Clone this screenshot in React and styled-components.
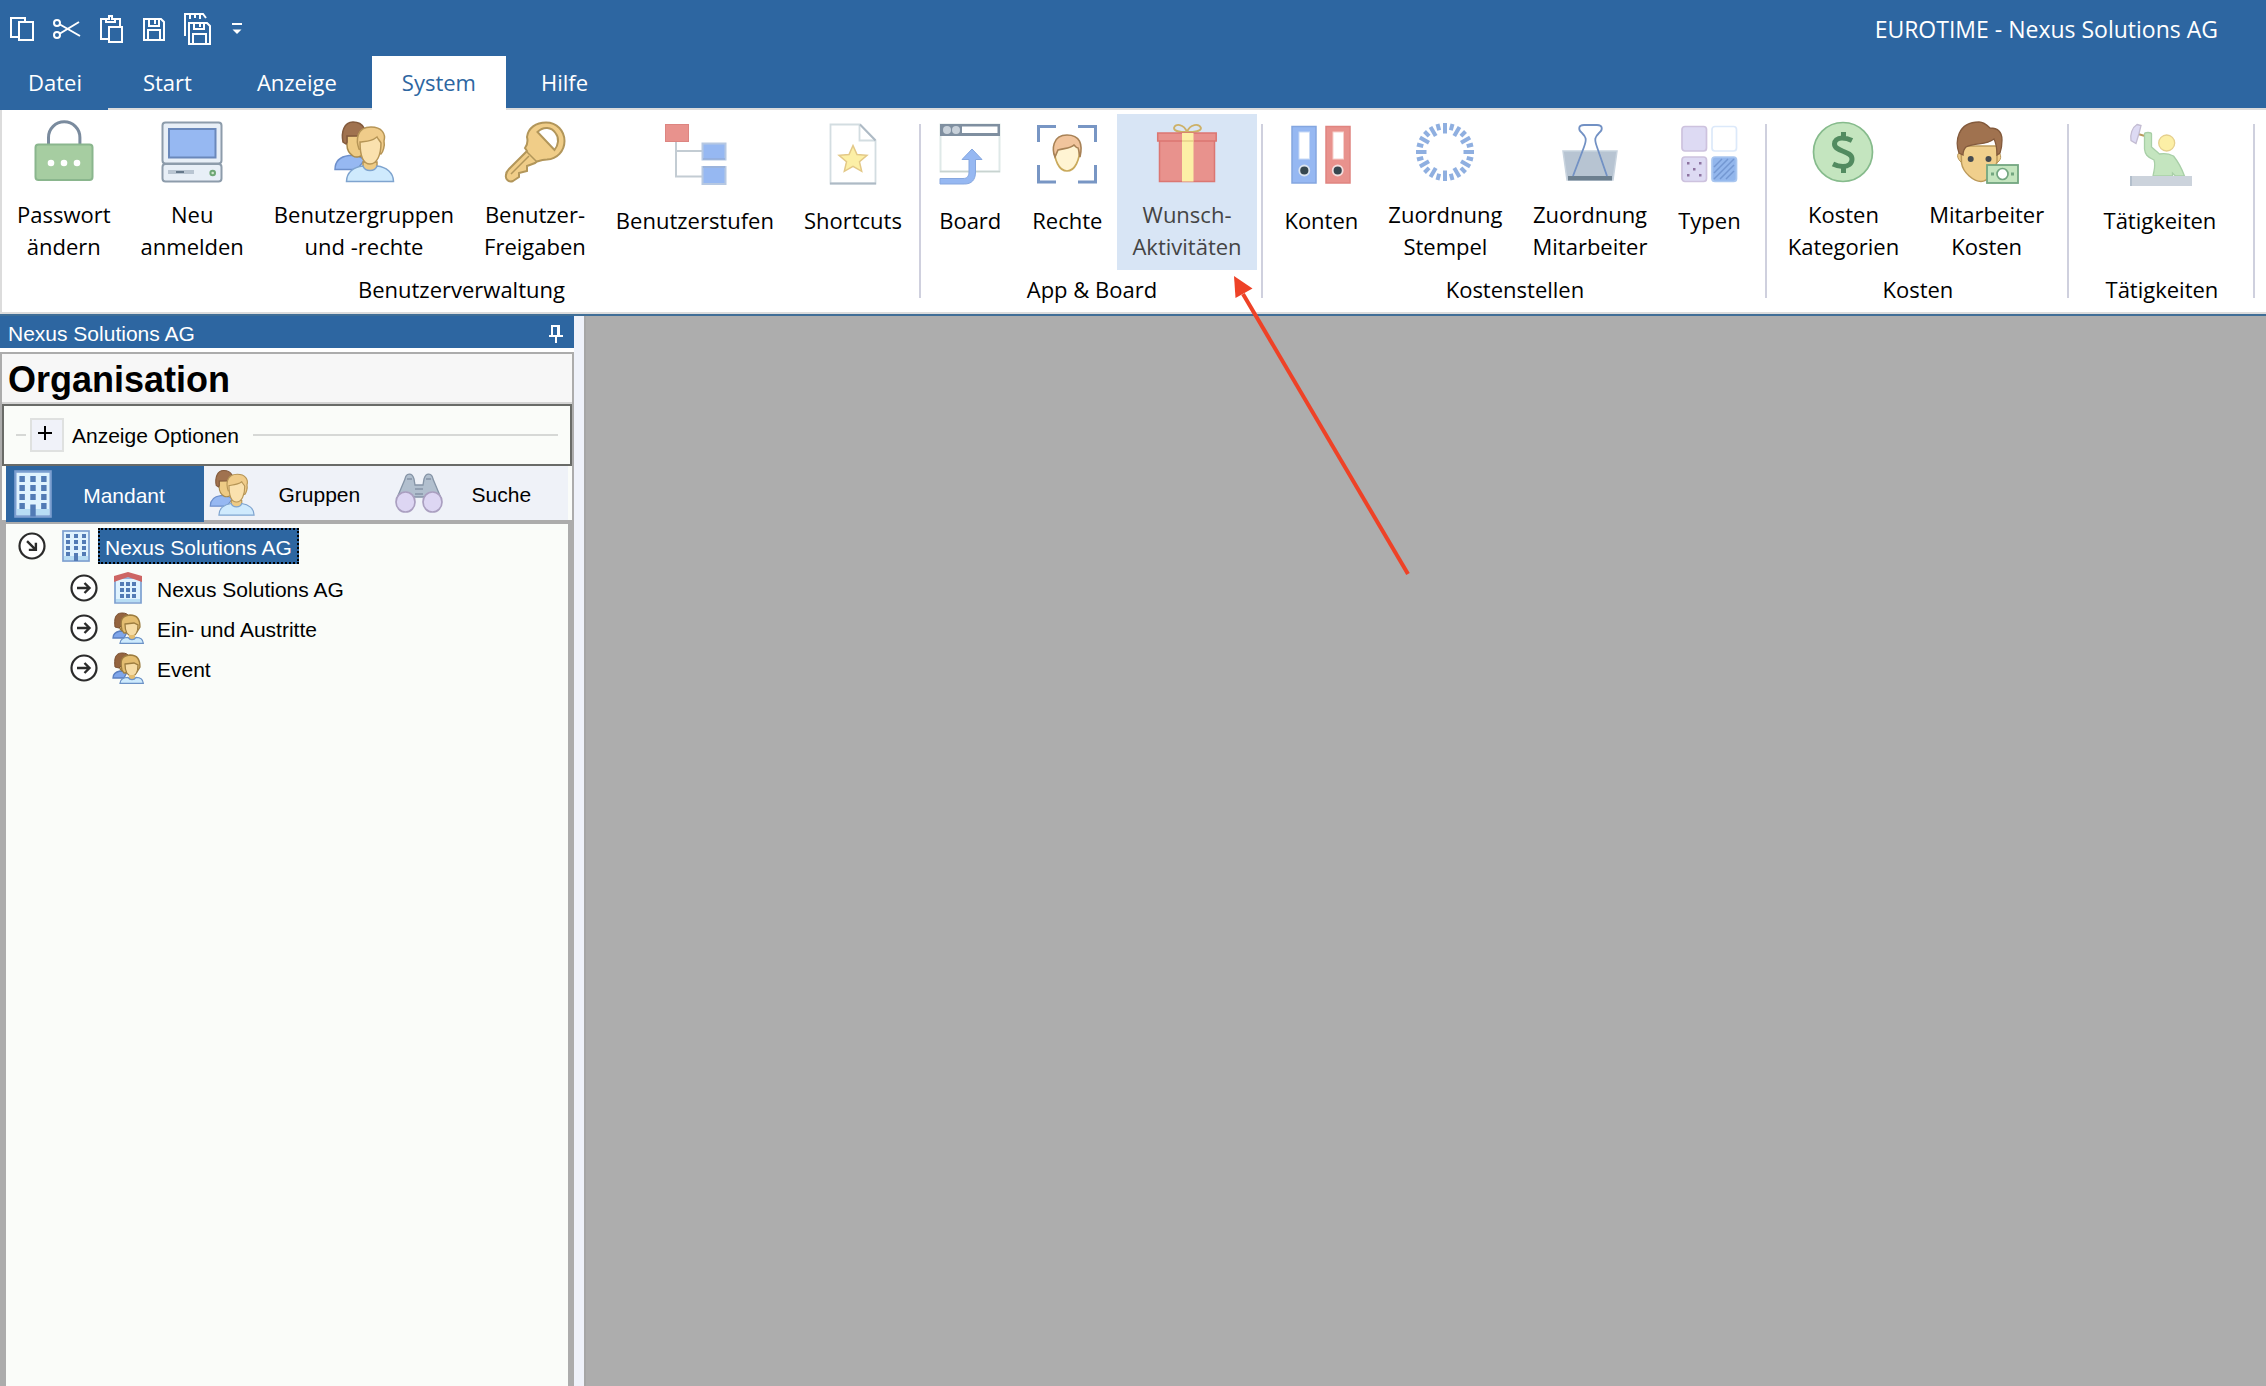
import React, { useState } from "react";
import styled, { createGlobalStyle } from "styled-components";

const BLUE = "#2d66a1";

/* ---------- ribbon icons (64x64) ---------- */

const LockIcon = () => (
  <svg viewBox="0 0 64 64">
    <path d="M16.5 25V17.5a15.7 15.7 0 0 1 31.4 0V25" fill="none" stroke="#7a8b9e" strokeWidth="3" />
    <rect x="3.5" y="24.5" width="57" height="35.5" rx="3" fill="#a6cda1" stroke="#8ab68d" strokeWidth="2" />
    <circle cx="19" cy="43" r="3.3" fill="#fff" />
    <circle cx="32" cy="43" r="3.3" fill="#fff" />
    <circle cx="45" cy="43" r="3.3" fill="#fff" />
  </svg>
);

const ComputerIcon = () => (
  <svg viewBox="0 0 64 64">
    <rect x="2.5" y="2.5" width="59" height="41" rx="3" fill="#e8eff7" stroke="#8d9cab" strokeWidth="2" />
    <rect x="2.5" y="44" width="59" height="17.5" rx="3" fill="#e8eff7" stroke="#8d9cab" strokeWidth="2" />
    <rect x="9" y="9" width="46.5" height="28.5" fill="#96b8f2" stroke="#6a88bb" strokeWidth="2" />
    <rect x="8" y="50" width="26" height="4" fill="#b9c5d2" />
    <rect x="16" y="51" width="8" height="2" fill="#65788b" />
    <circle cx="52.7" cy="53" r="2.3" fill="#cfe6cd" stroke="#6ea775" strokeWidth="2" />
  </svg>
);

const UsersIcon = () => (
  <svg viewBox="0 0 64 64">
    <path d="M3 49.500c0-9 6-13 14-14h8l8 4-8 10z" fill="#96b8f2" stroke="#6d8fcb" strokeWidth="1.5" />
    <path d="M15 16v9c0 5 3 9 6 11 3 2 8 1 10-2V15z" fill="#eecb85" stroke="#a98a4c" strokeWidth="1.5" />
    <path d="M11 22C9 12 12 2 21 2c5 0 9 2 11 6l-6 8H15v6l-1 2z" fill="#a0724f" stroke="#835a3c" strokeWidth="1.5" />
    <path d="M31 42v9c3 4 11 4 14 0v-9z" fill="#eecb85" stroke="#b69556" strokeWidth="1.5" />
    <path d="M27 29c-3-8-3-22 12-22 11 0 15 7 13 14 1 5-1 11-3 13z" fill="#f0cc8a" stroke="#b69556" strokeWidth="1.5" />
    <path d="M28 22c8-1 12-1 17-5 1 2 3 4 4 6 0 12-4 21-11 21s-10-9-10-22z" fill="#fae1ae" stroke="#b69556" strokeWidth="1.5" />
    <path d="M14.5 61.5c0-9 7-14.5 16.5-15.5 2 6 12 6 14 0 9 1 16.5 6.5 16.5 15.5z" fill="#cfeafd" stroke="#7fa4cf" strokeWidth="1.5" />
  </svg>
);

const KeyIcon = () => (
  <svg viewBox="0 0 64 64">
    <path
      d="M24 17C25 8 33 2.500 43 2.500 54 2.500 61.500 11 61.500 21S54 39 44 39.500c-4 0-7 1-10 2l-2 1.500-8 3v5l-8 2v4L10 61c-4 2-8-2-7-6 0-3 1-4 3-6l18-18-2-3c3-4 3-7 2-11z"
      fill="#f0cd88"
      stroke="#b2965a"
      strokeWidth="2"
    />
    <path d="M34.5 12c6-6 14-5 18 1 4 5 3 12-1 17z" fill="#fff" stroke="#b2965a" strokeWidth="2" />
    <path d="M24 32l10 10M8 54l18-18" stroke="#b2965a" strokeWidth="1.5" fill="none" />
  </svg>
);

const TreeIcon = () => (
  <svg viewBox="0 0 64 64">
    <path d="M13 20v34.5h26M13 29h26" fill="none" stroke="#c3ccd3" strokeWidth="2" />
    <rect x="2.5" y="2.5" width="23" height="17" fill="#e8928d" stroke="#dd8581" />
    <rect x="39.5" y="21.5" width="23" height="16" fill="#96b8f2" stroke="#b6c8e2" strokeWidth="2" />
    <rect x="39.5" y="45" width="23" height="17" fill="#96b8f2" stroke="#b6c8e2" strokeWidth="2" />
    <path d="M40 37h22M40 45h22" stroke="#809fd6" />
  </svg>
);

const StarPageIcon = () => (
  <svg viewBox="0 0 64 64">
    <path d="M9.5 2.5H39L54.5 18v43.5h-45z" fill="#fff" stroke="#d3dde1" strokeWidth="1.8" />
    <path d="M38.5 3v15.5H54" fill="none" stroke="#d3dde1" strokeWidth="1.8" />
    <path d="M39 2.5l15.5 16M9 61.5h46" stroke="#aebac5" strokeWidth="1.8" />
    <path d="M32 23.5l4 9 10 .8-7.500 6.5 2.200 9.500-8.700-5-8.700 5 2.200-9.500-7.500-6.500 10-.8z" fill="#fcefa6" stroke="#e3c887" strokeWidth="1.5" />
  </svg>
);

const BoardIcon = () => (
  <svg viewBox="0 0 64 64">
    <rect x="2.5" y="2.5" width="59" height="47" fill="#fff" stroke="#dfe9e8" strokeWidth="2" />
    <path d="M2 49.5h60" stroke="#c8d3d0" strokeWidth="1.5" />
    <rect x="2" y="2" width="60" height="12" fill="#7f8fa0" />
    <rect x="24" y="4.5" width="35.5" height="6.5" fill="#fff" />
    <circle cx="9" cy="8" r="4" fill="#c8d1da" />
    <circle cx="18" cy="8" r="4" fill="#c8d1da" />
    <path d="M2 56.500h23c4 0 6-2 6-7V37.500h-7L34 27l10 10.500h-6.500V50c0 8-4 12-11 12H2z" fill="#96b8f2" stroke="#86a7df" />
  </svg>
);

const FaceScanIcon = () => (
  <svg viewBox="0 0 64 64">
    <path d="M3.5 20V4.5H21M43 4.5h17.5V20M60.5 43v17H43M21 60H3.5V43" fill="none" stroke="#7896c4" strokeWidth="3" />
    <path d="M19 24c0 14 5 25 13 25s13-11 13-25c-1-4-4-6-6-6H25z" fill="#fff4d3" stroke="#c9a95b" strokeWidth="1.7" />
    <path d="M20 35c-3-7-3-22 12-22 13 0 16 9 13 22-1-4-1-7-2-9-2 0-3-2-4-3-4 4-10 3-16 5z" fill="#f1c49c" stroke="#a88256" strokeWidth="1.6" />
  </svg>
);

const GiftIcon = () => (
  <svg viewBox="0 0 64 64">
    <path d="M32 12C26 12 19 12 19 8c1-5 10-4 13 4 3-8 12-9 14-4 0 4-8 4-14 4z" fill="none" stroke="#cdb168" strokeWidth="1.8" />
    <rect x="4.5" y="20" width="55" height="41.5" fill="#e8928d" stroke="#db7672" strokeWidth="1.5" />
    <rect x="2.7" y="13" width="58.5" height="8" fill="#e8928d" stroke="#db7672" strokeWidth="1.5" />
    <rect x="27" y="13" width="11.5" height="48.5" fill="#fcefa6" />
    <path d="M27 21h11.5" stroke="#e7cf87" strokeWidth="1.5" />
  </svg>
);

const FoldersIcon = () => (
  <svg viewBox="0 0 64 64">
    <rect x="3" y="4.5" width="24" height="56.5" fill="#96b8f2" stroke="#84a6e0" strokeWidth="1.5" />
    <rect x="37" y="4.5" width="24" height="56.5" fill="#e8928d" stroke="#e08480" strokeWidth="1.5" />
    <rect x="10" y="10" width="10.5" height="27" fill="#fff" stroke="#c7d9f5" />
    <rect x="44" y="10" width="10.5" height="27" fill="#fff" stroke="#f5cfcc" />
    <circle cx="15.3" cy="48.5" r="5" fill="#36474f" stroke="#dbe4ef" strokeWidth="1.8" />
    <circle cx="48.7" cy="48.5" r="5" fill="#36474f" stroke="#f2dede" strokeWidth="1.8" />
  </svg>
);

const StampIcon = () => (
  <svg viewBox="0 0 64 64">
    {Array.from({ length: 24 }, (_, i) => (
      <path
        key={i}
        d={i % 2 === 0 ? "M32 3v10.5" : "M32 3v6.5"}
        transform={`rotate(${i * 15} 32 32)`}
        stroke="#8fafe0"
        strokeWidth="4"
      />
    ))}
  </svg>
);

const ClipIcon = () => (
  <svg viewBox="0 0 64 64">
    <path d="M5 31h54l-4 29H9z" fill="#b7c4d2" stroke="#c8d3de" strokeWidth="1.5" />
    <rect x="10" y="56" width="44" height="4.5" fill="#6c7f8f" />
    <path d="M15 56l11-29c3-8 2-10-2-14-4-3-4-8 2-8h13c6 0 6 5 2 8-4 4-5 6-2 14l10 29" fill="none" stroke="#7291c4" strokeWidth="1.8" />
  </svg>
);

const TypesIcon = () => (
  <svg viewBox="0 0 64 64">
    <rect x="5" y="4.5" width="24.5" height="24.5" rx="3" fill="#dddaf3" stroke="#cdc2de" strokeWidth="1.7" />
    <rect x="35" y="4.5" width="24.5" height="24.5" rx="3" fill="#fff" stroke="#dce9fa" strokeWidth="1.7" />
    <rect x="5" y="35" width="24.5" height="24.5" rx="3" fill="#dddaf3" stroke="#cdc2de" strokeWidth="1.7" />
    <rect x="35" y="35" width="24.5" height="24.5" rx="3" fill="#92b6ec" stroke="#a9c6ef" strokeWidth="1.7" />
    <path d="M37 45l8-8M37 51l14-14M37 57l20-20M43 57l14-14M49 57l8-8" stroke="#7397d2" strokeWidth="1.5" />
    <path d="M10 40h2.5v2.5H10zM22 40h2.5v2.5H22zM16 46h2.5v2.5H16zM10 52h2.5v2.5H10zM22 52h2.5v2.5H22z" fill="#8d73a0" />
  </svg>
);

const DollarIcon = () => (
  <svg viewBox="0 0 64 64">
    <circle cx="32" cy="32" r="29.5" fill="#c4e5bf" stroke="#86bb8c" strokeWidth="1.7" />
    <path
      d="M41 20.5c-4-2-7-2.500-10-2.500-5 0-7.500 3-7.500 6 0 8 17.500 6.500 17.500 15 0 5-4 7.500-9 7.500-4 0-7-1-10-2.500M32.500 12v7M32.500 46v7"
      fill="none"
      stroke="#528b60"
      strokeWidth="5"
    />
  </svg>
);

const EmployeeCostIcon = () => (
  <svg viewBox="0 0 64 64">
    <path d="M3 34c1-2 5-1 5 2v8l-3-3c-2-2-3-5-2-7zM45 34c-1-2-4-1-4 2v8l3-3c2-2 2-5 1-7z" fill="#f0cc8a" stroke="#b69556" />
    <path d="M6 26h36v16c-2 9-9 19.5-16 19.5S8 53 6.500 43z" fill="#f0cf8c" stroke="#bc9a5b" strokeWidth="1.5" />
    <path d="M4 33C0 22 2 2 24 2c5 0 8 3 11 6 11 0 12 8 12 12 0 6-1 10-2 13l-3 2c0-7-1-12-3-16-9 7-17 3-28 8-2 2-3 4-3 8z" fill="#a0724f" stroke="#835a3c" strokeWidth="1.3" />
    <circle cx="15.7" cy="39" r="3" fill="#454b50" />
    <circle cx="33.5" cy="39" r="3" fill="#454b50" />
    <rect x="32" y="45" width="31" height="18" fill="#c4e5bf" stroke="#73a680" strokeWidth="1.8" />
    <circle cx="47.5" cy="54" r="5.5" fill="#fff" stroke="#73a680" strokeWidth="1.7" />
    <path d="M36 54h3M56 54h3" stroke="#73a680" strokeWidth="3" />
  </svg>
);

const WorkerIcon = () => (
  <svg viewBox="0 0 64 64">
    <path d="M10 12l7 2" stroke="#b99b5e" strokeWidth="2" />
    <path d="M9 2.5l4 1-2 8-3 10-5-3c-1-6 1-13 6-16z" fill="#dddaf3" stroke="#c3bcd2" strokeWidth="1.3" />
    <path
      d="M16.5 12c0-2 7-2 7 0v13l8 7c5-1 10 0 14 2 4 5 8 12 11 20h-9l-3-3v3H25c1-6 3-10 1-16-7-3-9-6-9.500-11z"
      fill="#c4e5bf"
      stroke="#a8cfa7"
      strokeWidth="1.3"
    />
    <circle cx="38.7" cy="21" r="8" fill="#fcefa6" stroke="#e5cf8e" strokeWidth="1.3" />
    <rect x="2" y="54" width="62" height="10" fill="#ccd3dc" />
    <path d="M3 54v10" stroke="#b3bfcc" strokeWidth="2" />
  </svg>
);

/* ---------- quick access icons ---------- */

const CopyIcon = () => (
  <svg width="24" height="24" viewBox="0 0 24 24">
    <path d="M9 20H1V1h14v3M9 5h14v18H9z" />
  </svg>
);

const CutIcon = () => (
  <svg width="28" height="24" viewBox="0 0 28 24">
    <circle cx="4" cy="6" r="3" />
    <circle cx="4" cy="18" r="3" />
    <path d="M7 7.5L27 19M7 16.5L26 5" />
  </svg>
);

const PasteIcon = () => (
  <svg width="24" height="28" viewBox="0 0 24 28">
    <path d="M8 24H1V4h5M15 4h5v7M6 7V4h3V1h3v3h3v3zM9 12h13v15H9z" />
  </svg>
);

const SaveIcon = () => (
  <svg width="22" height="24" viewBox="0 0 22 24">
    <path d="M1 2h17l3 3v18H1zM6 2v7h10V2M12 3v4M5 23V13h12v10" />
  </svg>
);

const SaveAllIcon = () => (
  <svg width="28" height="32" viewBox="0 0 28 32">
    <path d="M1 23V1h18l3 4M6 1v5M11 1v4M16 1v5M5 10h18l3 3v18H5zM10 10v6h10v-6M16 11v3M9 31V21h13v10" />
  </svg>
);

const MoreIcon = () => (
  <svg width="12" height="14" viewBox="0 0 12 14">
    <path d="M1 2h10" />
    <path d="M1.5 7.5h9L6 12z" fill="#fff" stroke="none" />
  </svg>
);

const PinIcon = () => (
  <svg width="16" height="18" viewBox="0 0 16 18">
    <path d="M4 11V1h7v10M10 1v10M1 11h14M8 11v7" fill="none" stroke="#fff" strokeWidth="2" />
  </svg>
);

/* ---------- side panel icons ---------- */

const BuildingIcon = () => (
  <svg viewBox="0 0 28 32" preserveAspectRatio="none">
    <rect x="1" y="1" width="26" height="30" fill="#e0f3fe" stroke="#7c9fd0" strokeWidth="1.7" />
    <path d="M2 26h24v4H2z" fill="#b8ddf4" />
    <path
      d="M4 4h4v4H4zM12 4h4v4h-4zM20 4h4v4h-4zM4 10h4v4H4zM12 10h4v4h-4zM20 10h4v4h-4zM4 16h4v4H4zM12 16h4v4h-4zM20 16h4v4h-4zM4 22h4v4H4zM20 22h4v4h-4zM12 23h4v8h-4z"
      fill="#527bb5"
    />
  </svg>
);

const HouseIcon = () => (
  <svg viewBox="0 0 28 32" preserveAspectRatio="none">
    <path d="M1 6h26v25H1z" fill="#e0f3fe" stroke="#7c9fd0" strokeWidth="1.7" />
    <path d="M2 27h24v3H2z" fill="#b8ddf4" />
    <path d="M0 8V4l14-4 14 4v6L14 5 0 10z" fill="#cd6564" />
    <path
      d="M6 10h4v4H6zM12 10h4v4h-4zM18 10h4v4h-4zM6 16h4v4H6zM12 16h4v4h-4zM18 16h4v4h-4zM6 22h4v4H6zM12 22h4v4h-4zM18 22h4v4h-4z"
      fill="#527bb5"
    />
  </svg>
);

/* smaller users drawing with heavier outlines for tree rows */
const GroupIcon = () => (
  <svg viewBox="0 0 32 32">
    <path d="M1 26c0-4 2-6 7-7l7 1-3 6z" fill="#7fa6ea" stroke="#5c80c0" strokeWidth="1.3" />
    <path d="M7 9v4c0 3 2 6 4 6l5-2V8z" fill="#dcb368" stroke="#94763c" strokeWidth="1.3" />
    <path d="M3 15C2 7 3 1 10 1c4 0 6 1 7 4l-5 6-5 5z" fill="#94643f" stroke="#7a5133" />
    <path d="M10 18C8 9 9 4 18 3c8 0 10 5 10 12l-3 5-13 1z" fill="#e3bd70" stroke="#9c7d40" strokeWidth="1.3" />
    <path d="M13 12l9-1 4 2c0 6-2 11-6 11-5 0-7-6-7-12z" fill="#f6dca4" stroke="#9c7d40" strokeWidth="1.3" />
    <path d="M17 23v4h6v-4z" fill="#e3bd70" />
    <path d="M8 31.300c0-4 4-6 8-6 2 3 6 3 8 0 4 0 7 2 7.300 6z" fill="#cdeafd" stroke="#6c92c6" strokeWidth="1.3" />
  </svg>
);

const BinocularsIcon = () => (
  <svg viewBox="0 0 48 42">
    <path d="M2 26L10 7c1-6 7-7 9 0l1 6h8l1-6c2-7 8-6 9 0l8 19-8 8-9-9h-10l-9 9z" fill="#b1bfce" stroke="#8594a6" strokeWidth="1.3" />
    <path d="M20 17h8M20 22h8M12 7h5M31 7h5" stroke="#8594a6" strokeWidth="1.5" />
    <ellipse cx="10.5" cy="30" rx="9.5" ry="10" fill="#ddd6f3" stroke="#aa9fc0" strokeWidth="1.7" />
    <ellipse cx="37.5" cy="30" rx="9.5" ry="10" fill="#ddd6f3" stroke="#aa9fc0" strokeWidth="1.7" />
  </svg>
);

const ExpandIcon = ({ open }) => (
  <svg viewBox="0 0 28 28">
    <circle cx="14" cy="14" r="12.5" fill="#fff" stroke="#2b2b2b" strokeWidth="2.2" />
    <path d="M7 14h12M14.5 9l5 5-5 5" transform={open ? "rotate(45 14 14)" : undefined} fill="none" stroke="#2b2b2b" strokeWidth="2.4" />
  </svg>
);

/* ---------- data ---------- */

const quickAccess = [
  { title: "Kopieren", Icon: CopyIcon },
  { title: "Ausschneiden", Icon: CutIcon },
  { title: "Einfügen", Icon: PasteIcon },
  { title: "Speichern", Icon: SaveIcon },
  { title: "Alle speichern", Icon: SaveAllIcon },
  { title: "Mehr", Icon: MoreIcon },
];

const menu = ["Datei", "Start", "Anzeige", "System", "Hilfe"];

const groups = [
  {
    title: "Benutzerverwaltung",
    width: 918,
    items: [
      { lines: ["Passwort", "ändern"], Icon: LockIcon },
      { lines: ["Neu", "anmelden"], Icon: ComputerIcon },
      { lines: ["Benutzergruppen", "und -rechte"], Icon: UsersIcon },
      { lines: ["Benutzer-", "Freigaben"], Icon: KeyIcon },
      { lines: ["Benutzerstufen"], Icon: TreeIcon },
      { lines: ["Shortcuts"], Icon: StarPageIcon },
    ],
  },
  {
    title: "App & Board",
    width: 342,
    items: [
      { lines: ["Board"], Icon: BoardIcon },
      { lines: ["Rechte"], Icon: FaceScanIcon },
      { lines: ["Wunsch-", "Aktivitäten"], Icon: GiftIcon, marked: true },
    ],
  },
  {
    title: "Kostenstellen",
    width: 504,
    items: [
      { lines: ["Konten"], Icon: FoldersIcon },
      { lines: ["Zuordnung", "Stempel"], Icon: StampIcon },
      { lines: ["Zuordnung", "Mitarbeiter"], Icon: ClipIcon },
      { lines: ["Typen"], Icon: TypesIcon },
    ],
  },
  {
    title: "Kosten",
    width: 302,
    items: [
      { lines: ["Kosten", "Kategorien"], Icon: DollarIcon },
      { lines: ["Mitarbeiter", "Kosten"], Icon: EmployeeCostIcon },
    ],
  },
  {
    title: "Tätigkeiten",
    width: 186,
    items: [{ lines: ["Tätigkeiten"], Icon: WorkerIcon }],
  },
];

const sideTabs = [
  { name: "Mandant", width: 196, Icon: BuildingIcon },
  { name: "Gruppen", width: 188, Icon: UsersIcon },
  { name: "Suche", width: 178, Icon: BinocularsIcon },
];

const nodes = [
  { name: "Nexus Solutions AG", Icon: HouseIcon },
  { name: "Ein- und Austritte", Icon: GroupIcon, wide: true },
  { name: "Event", Icon: GroupIcon, wide: true },
];

const App = () => {
  const [tab, setTab] = useState("System");
  const [sideTab, setSideTab] = useState("Mandant");

  return (
    <Page>
      <GlobalStyle />
      <Header>
        <TitleBar>
          <QuickAccess>
            {quickAccess.map(({ title, Icon }) => (
              <QuickButton key={title} aria-label={title}>
                <Icon />
              </QuickButton>
            ))}
          </QuickAccess>
          <Title>EUROTIME - Nexus Solutions AG</Title>
        </TitleBar>
        <Menu>
          {menu.map((x) => (
            <MenuTab key={x} $active={tab === x} $first={x === "Datei"} onClick={() => setTab(x)}>
              {x}
            </MenuTab>
          ))}
        </Menu>
      </Header>

      <Ribbon>
        {groups.map((g) => (
          <Group key={g.title} $width={g.width}>
            <GroupItems>
              {g.items.map(({ lines, Icon, marked }) => (
                <RibbonButton key={lines.join("")} $marked={marked} $single={lines.length === 1}>
                  <Icon />
                  <span>
                    {lines.map((l) => (
                      <Line key={l}>{l}</Line>
                    ))}
                  </span>
                  {marked && (
                    <Pointer viewBox="0 0 180 306" aria-hidden="true">
                      <path d="M12 22L177 302" stroke="#ee4227" strokeWidth="4" />
                      <path d="M3 4l18.5 12.5L4.500 26z" fill="#ee4227" />
                    </Pointer>
                  )}
                </RibbonButton>
              ))}
            </GroupItems>
            <GroupTitle>{g.title}</GroupTitle>
          </Group>
        ))}
      </Ribbon>

      <Body>
        <Side>
          <SideHeader>
            Nexus Solutions AG
            <PinButton aria-label="Anheften">
              <PinIcon />
            </PinButton>
          </SideHeader>
          <SideBody>
            <Heading>Organisation</Heading>
            <Options>
              <Rule $short />
              <PlusButton id="plus" aria-labelledby="optionen">
                <svg width="14" height="14" viewBox="0 0 14 14">
                  <path d="M7 0v14M0 7h14" stroke="#000" strokeWidth="2" />
                </svg>
              </PlusButton>
              <OptionsLabel id="optionen" htmlFor="plus">
                Anzeige Optionen
              </OptionsLabel>
              <Rule />
            </Options>
            <SideTabs>
              {sideTabs.map(({ name, width, Icon }) => (
                <SideTab key={name} $width={width} $active={sideTab === name} onClick={() => setSideTab(name)}>
                  <Icon />
                  <span>{name}</span>
                </SideTab>
              ))}
            </SideTabs>
            <Tree>
              <Node>
                <Expander aria-label="Zuklappen">
                  <ExpandIcon open />
                </Expander>
                <NodeIcon>
                  <BuildingIcon />
                </NodeIcon>
                <NodeName $selected>Nexus Solutions AG</NodeName>
              </Node>
              <Children>
                {nodes.map(({ name, Icon, wide }) => (
                  <Node key={name}>
                    <Expander aria-label="Aufklappen">
                      <ExpandIcon />
                    </Expander>
                    <NodeIcon $wide={wide}>
                      <Icon />
                    </NodeIcon>
                    <NodeName>{name}</NodeName>
                  </Node>
                ))}
              </Children>
            </Tree>
          </SideBody>
        </Side>
        <Splitter />
        <Workspace />
      </Body>
    </Page>
  );
};

const GlobalStyle = createGlobalStyle`
  * {
    box-sizing: border-box;
  }
  body {
    margin: 0;
    background: #adadad;
  }
  button {
    font: inherit;
    color: inherit;
    border: none;
    background: none;
    padding: 0;
    cursor: pointer;
  }
`;

const Page = styled.div`
  display: flex;
  flex-direction: column;
  min-height: 100vh;
  font-family: "Open Sans", "Noto Sans", sans-serif;
  font-size: 22px;
  line-height: 32px;
  color: #000;
`;

const Header = styled.header`
  background: ${BLUE};
  color: #fff;
`;

const TitleBar = styled.div`
  display: flex;
  align-items: center;
  justify-content: space-between;
  height: 56px;
  padding: 2px 48px 0 10px;
`;

const QuickAccess = styled.div`
  display: flex;
  align-items: center;
  gap: 19px;
`;

const QuickButton = styled.button`
  display: flex;
  svg {
    fill: none;
    stroke: #fff;
    stroke-width: 2;
  }
`;

const Title = styled.div`
  font-size: 23px;
`;

const Menu = styled.nav`
  display: flex;
  gap: 5px;
  height: 54px;
  background: linear-gradient(#dcdcdc, #dcdcdc) 108px 100% / 100% 2px no-repeat;
`;

const MenuTab = styled.button`
  height: 54px;
  padding: ${(props) => (props.$first ? "0 26px 2px 28px" : "0 30px 2px")};
  color: ${(props) => (props.$active ? BLUE : "#fff")};
  background: ${(props) => (props.$active ? "#fff" : "none")};
`;

const Ribbon = styled.div`
  display: flex;
  padding: 4px 0 7px;
  margin-bottom: 2px;
  background: #fff;
  border-left: 2px solid #dcdcdc;
  border-bottom: 2px solid #dcdcdc;
  box-shadow: 0 2px 0 #3f6e97;
  position: relative;
  z-index: 1;
`;

const Group = styled.section`
  display: flex;
  flex-direction: column;
  justify-content: space-between;
  min-width: ${(props) => props.$width}px;
  height: 191px;
  background: linear-gradient(#cfd0de, #cfd0de) 100% 10px / 2px 174px no-repeat;
`;

const GroupItems = styled.div`
  display: flex;
  justify-content: center;
  padding-right: 4px;
`;

const GroupTitle = styled.div`
  text-align: center;
`;

const RibbonButton = styled.button`
  position: relative;
  display: flex;
  flex-direction: column;
  align-items: center;
  gap: ${(props) => (props.$single ? "18px" : "14px")};
  height: 156px;
  padding: ${(props) => (props.$single ? "8px" : "6px")} 15px 0;
  background: ${(props) => (props.$marked ? "#d8e5f5" : "none")};
  color: ${(props) => (props.$marked ? "#444" : "#000")};
  > svg:first-child {
    width: 64px;
    height: 64px;
  }
`;

const Line = styled.span`
  display: block;
  white-space: nowrap;
`;

/* callout arrow hanging below the marked button */
const Pointer = styled.svg`
  position: absolute;
  left: 114px;
  top: 158px;
  width: 180px;
  height: 306px;
  pointer-events: none;
`;

const Body = styled.main`
  display: flex;
  flex: 1;
`;

const Side = styled.aside`
  display: flex;
  flex-direction: column;
  width: 574px;
  background: #fff;
  font-family: "Liberation Sans", Arial, sans-serif;
  font-size: 21px;
`;

const SideHeader = styled.div`
  display: flex;
  align-items: center;
  justify-content: space-between;
  height: 32px;
  padding: 4px 10px 0 8px;
  margin-bottom: 4px;
  background: ${BLUE};
  color: #fff;
`;

const PinButton = styled.button`
  display: flex;
`;

const SideBody = styled.div`
  display: flex;
  flex-direction: column;
  flex: 1;
  border: 2px solid #acacac;
  border-bottom: none;
  background: #fafcf9;
`;

const Heading = styled.h1`
  margin: 0;
  padding: 5px 6px 0;
  height: 50px;
  font-size: 36px;
  line-height: 42px;
  background: #f7f7f7;
  border-bottom: 2px solid #d4d4d4;
`;

const Options = styled.div`
  display: flex;
  align-items: center;
  height: 62px;
  padding: 0 12px;
  border: 2px solid #696b68;
`;

const Rule = styled.div`
  height: 2px;
  background: #d6d8d6;
  flex: ${(props) => (props.$short ? "0 0 10px" : "1")};
`;

const PlusButton = styled.button`
  display: flex;
  justify-content: center;
  padding: 6px 4px 0 0;
  width: 34px;
  height: 34px;
  margin: 0 8px 0 4px;
  border: 2px solid #dfe1e0;
  background: #f0f2f9;
`;

const OptionsLabel = styled.label`
  padding-top: 2px;
  margin-right: 14px;
`;

const SideTabs = styled.div`
  display: flex;
  height: 54px;
  margin: 0 4px;
  background: #eff2f8;
`;

const SideTab = styled.button`
  display: flex;
  align-items: center;
  height: ${(props) => (props.$active ? "56px" : "54px")};
  padding: 0 8px 0 ${(props) => (props.$active ? "8px" : "4px")};
  flex: ${(props) => props.$width} 1 0;
  color: ${(props) => (props.$active ? "#fff" : "#000")};
  background: ${(props) => (props.$active ? BLUE : "none")};
  position: relative;
  svg {
    width: ${(props) => (props.$active ? "38px" : "48px")};
    height: 48px;
  }
  span {
    flex: 1;
    padding-top: 4px;
    text-align: center;
  }
`;

const Tree = styled.ul`
  flex: 1;
  margin: 0;
  padding: 2px 10px;
  list-style: none;
  border: 4px solid #acacac;
  border-bottom: none;
`;

const Children = styled.ul`
  margin: 2px 0 0;
  padding: 0 0 0 52px;
  list-style: none;
`;

const Node = styled.li`
  display: flex;
  align-items: center;
  height: 40px;
`;

const Expander = styled.button`
  display: flex;
  width: 28px;
  height: 28px;
  margin: 0 14px 0 2px;
`;

const NodeIcon = styled.span`
  display: flex;
  justify-content: center;
  width: 32px;
  height: 32px;
  margin-right: 6px;
  svg {
    width: ${(props) => (props.$wide ? "32px" : "28px")};
    height: 32px;
  }
`;

const NodeName = styled.span`
  display: inline-flex;
  align-items: center;
  height: 36px;
  padding: 3px 5px 0;
  color: ${(props) => (props.$selected ? "#fff" : "#000")};
  background: ${(props) => (props.$selected ? BLUE : "none")};
  border: 2px ${(props) => (props.$selected ? "dotted #000" : "solid transparent")};
`;

const Splitter = styled.div`
  width: 10px;
  background: #eff2fa;
`;

const Workspace = styled.div`
  flex: 1;
  background: #adadad;
  border-left: 2px solid #a6a6a6;
`;

export default App;
